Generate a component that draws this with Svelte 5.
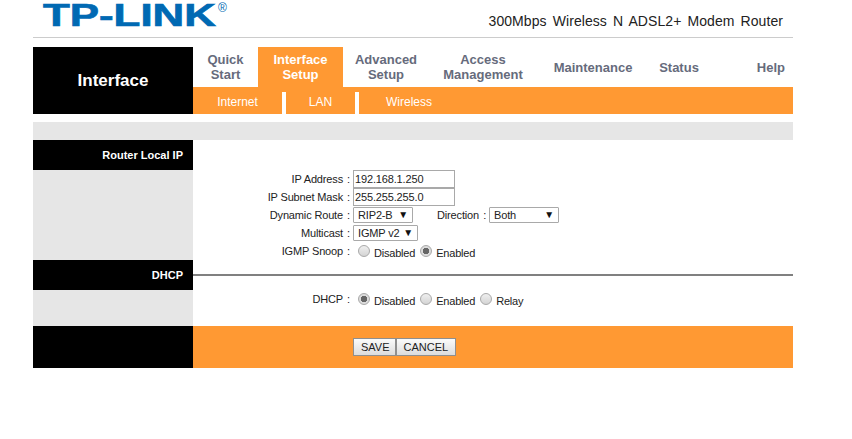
<script>
  const tabs = [
    { label: ['Quick', 'Start'], width: 65 },
    { label: ['Interface', 'Setup'], width: 85, active: true },
    { label: ['Advanced', 'Setup'], width: 86 },
    { label: ['Access', 'Management'], width: 108 },
    { label: ['Maintenance'], width: 112 },
    { label: ['Status'], width: 60 },
    { label: ['Help'], width: 84, help: true }
  ];
  const subs = [
    { label: 'Internet', width: 89 },
    { label: 'LAN', width: 69 },
    { label: 'Wireless', width: 100 }
  ];
</script>

<div class="page">
  <header class="top">
    <div class="logo"><span class="logo-text">TP-LINK</span><span class="reg">®</span></div>
    <div class="model">300Mbps Wireless N ADSL2+ Modem Router</div>
  </header>

  <div class="nav">
    <div class="nav-title">Interface</div>
    <div class="nav-main">
      <div class="tabs">
        {#each tabs as tab}
          <div class="tab" class:active={tab.active} class:help={tab.help} style="width: {tab.width}px">
            {#each tab.label as line}<span>{line}</span>{/each}
          </div>
        {/each}
      </div>
      <div class="subs">
        {#each subs as sub}
          <div class="sub" style="width: {sub.width}px">{sub.label}</div>
        {/each}
      </div>
    </div>
  </div>

  <div class="strip"></div>

  <section class="row">
    <div class="side">
      <div class="side-head">Router Local IP</div>
      <div class="side-fill"></div>
    </div>
    <div class="form local">
      <div class="field">
        <label for="ip">IP Address</label><span class="colon">:</span>
        <input id="ip" class="text" type="text" value="192.168.1.250" />
      </div>
      <div class="field">
        <label for="mask">IP Subnet Mask</label><span class="colon">:</span>
        <input id="mask" class="text" type="text" value="255.255.255.0" />
      </div>
      <div class="field pick">
        <label for="route">Dynamic Route</label><span class="colon">:</span>
        <div class="select route"><select id="route"><option>RIP2-B</option></select></div>
        <label class="dir" for="direction">Direction</label><span class="colon">:</span>
        <div class="select both"><select id="direction"><option>Both</option></select></div>
      </div>
      <div class="field pick">
        <label for="multicast">Multicast</label><span class="colon">:</span>
        <div class="select igmp"><select id="multicast"><option>IGMP v2</option></select></div>
      </div>
      <div class="field radios">
        <span class="name">IGMP Snoop</span><span class="colon">:</span>
        <div class="choices">
          <input type="radio" name="snoop" /><span>Disabled</span>
          <input type="radio" name="snoop" checked /><span>Enabled</span>
        </div>
      </div>
    </div>
  </section>

  <section class="row">
    <div class="side">
      <div class="side-head">DHCP</div>
      <div class="side-fill dhcp-fill"></div>
    </div>
    <div class="form dhcp">
      <div class="field radios">
        <span class="name">DHCP</span><span class="colon">:</span>
        <div class="choices">
          <input type="radio" name="dhcp" checked /><span>Disabled</span>
          <input type="radio" name="dhcp" /><span>Enabled</span>
          <input type="radio" name="dhcp" /><span>Relay</span>
        </div>
      </div>
    </div>
  </section>

  <footer class="foot">
    <div class="foot-side"></div>
    <div class="foot-main">
      <button class="save">SAVE</button><button>CANCEL</button>
    </div>
  </footer>
</div>

<style>
:global(body) {
  margin: 0;
  background: #fff;
}

.page {
  width: 760px;
  margin-left: 33px;
  font-family: "Liberation Sans", Arial, sans-serif;
  font-size: 11px;
  color: #222;
}

.top {
  height: 37px;
  border-bottom: 1px solid #ccc;
  display: flex;
  justify-content: space-between;
  margin-bottom: 9px;
}

.logo {
  margin: 2px 0 0 10px;
  display: flex;
  height: 26px;
  color: #0069b3;
  font-weight: bold;
}

.logo-text {
  font-size: 32px;
  line-height: 26px;
  display: inline-block;
  width: 127px;
  margin-right: 47px;
  -webkit-text-stroke: 0.7px #0069b3;
  transform: scaleX(1.37);
  transform-origin: left center;
}

.reg {
  font-size: 12px;
  line-height: 12px;
  margin-left: 1px;
  font-weight: normal;
}

.model {
  font-size: 14px;
  color: #222;
  padding: 13px 10px 0 0;
  word-spacing: 2.1px;
  letter-spacing: 0.07px;
}

.nav {
  display: flex;
  height: 67px;
}

.nav-title {
  width: 160px;
  background: #000;
  color: #fff;
  font-size: 17px;
  font-weight: bold;
  text-align: center;
  line-height: 67px;
}

.nav-main {
  flex: 1;
}

.tabs {
  display: flex;
  height: 40px;
}

.tab {
  display: flex;
  flex-direction: column;
  align-items: center;
  justify-content: center;
  color: #666b7c;
  font-size: 13px;
  font-weight: bold;
  line-height: 15px;
}

.tab.active {
  background: #ff9933;
  color: #fff;
}

.tab.help {
  align-items: flex-end;
  padding-right: 8px;
  box-sizing: border-box;
}

.subs {
  height: 27px;
  background: #ff9933;
  display: flex;
  align-items: flex-end;
}

.sub {
  height: 22px;
  line-height: 21px;
  padding-right: 4px;
  color: #fff;
  font-size: 12px;
  text-align: center;
  box-sizing: content-box;
  background: linear-gradient(to left, #fff 4px, transparent 4px);
}

.sub:last-child {
  background: none;
}

.strip {
  height: 18px;
  margin-top: 8px;
  background: #e6e6e6;
}

.row {
  display: flex;
}

.side {
  width: 160px;
  display: flex;
  flex-direction: column;
}

.side-head {
  height: 30px;
  background: #000;
  color: #fff;
  font-weight: bold;
  font-size: 11px;
  line-height: 30px;
  text-align: right;
  padding-right: 10px;
}

.side-fill {
  height: 90px;
  background: #e6e6e6;
}

.dhcp-fill {
  height: 36px;
}

.form {
  flex: 1;
  min-width: 0;
  letter-spacing: -0.15px;
}

.local {
  padding-top: 30px;
}

.dhcp {
  background: linear-gradient(#808080, #808080) 0 14px / 100% 2px no-repeat;
  padding-top: 30px;
}

.field {
  display: flex;
  align-items: center;
  height: 18px;
}

.field label,
.field .name {
  width: 150px;
  text-align: right;
}

.field .dir {
  width: auto;
  margin-left: 24px;
}

.colon {
  width: 7px;
  text-align: right;
  margin-right: 3px;
}

.text {
  width: 102px;
  height: 18px;
  box-sizing: border-box;
  border: 1px solid #a9a9a9;
  padding: 0 1px;
  font: inherit;
  letter-spacing: inherit;
  color: #222;
  background: #fff;
  border-radius: 0;
  outline: none;
}

.pick {
  padding-top: 1px;
  box-sizing: border-box;
  align-items: flex-start;
}

.pick label,
.pick .colon {
  line-height: 16px;
}

.select {
  position: relative;
  height: 16px;
}

.select select {
  appearance: none;
  width: 100%;
  height: 16px;
  box-sizing: border-box;
  border: 1px solid #a9a9a9;
  border-radius: 1px;
  background: #fff;
  padding: 0 0 0 4px;
  font: inherit;
  letter-spacing: inherit;
  color: #222;
  display: block;
}

.select::after {
  content: "▼";
  position: absolute;
  right: 5px;
  top: 1px;
  font-size: 10px;
  line-height: 13px;
  color: #111;
  pointer-events: none;
}

.route {
  width: 60px;
}

.both {
  width: 70px;
}

.igmp {
  width: 65px;
}

.choices {
  display: flex;
  align-items: flex-end;
  height: 18px;
}

.choices span {
  margin-right: 4px;
  line-height: 13px;
  letter-spacing: -0.2px;
}

.choices input {
  appearance: none;
  width: 12px;
  height: 12px;
  margin: 0 4px 3px 1px;
  border: 1px solid #a9a9a9;
  border-radius: 50%;
  background: linear-gradient(#efefef, #d4d4d4);
  box-sizing: border-box;
}

.choices input:first-child {
  margin-left: 5px;
}

.choices input:checked {
  background: radial-gradient(circle, #666 0 3px, #dcdcdc 3.5px);
}

.foot {
  display: flex;
  height: 42px;
}

.foot-side {
  width: 160px;
  background: #000;
}

.foot-main {
  flex: 1;
  background: #ff9933;
  padding: 12px 0 0 160px;
  display: flex;
  align-items: flex-start;
}

button {
  height: 18px;
  padding: 0 7px;
  border: 1px solid #8f8f8f;
  border-radius: 0;
  background: linear-gradient(#fbfbfb, #dcdcdc);
  font: inherit;
  color: #222;
}

.save {
  padding-right: 5px;
}
</style>
